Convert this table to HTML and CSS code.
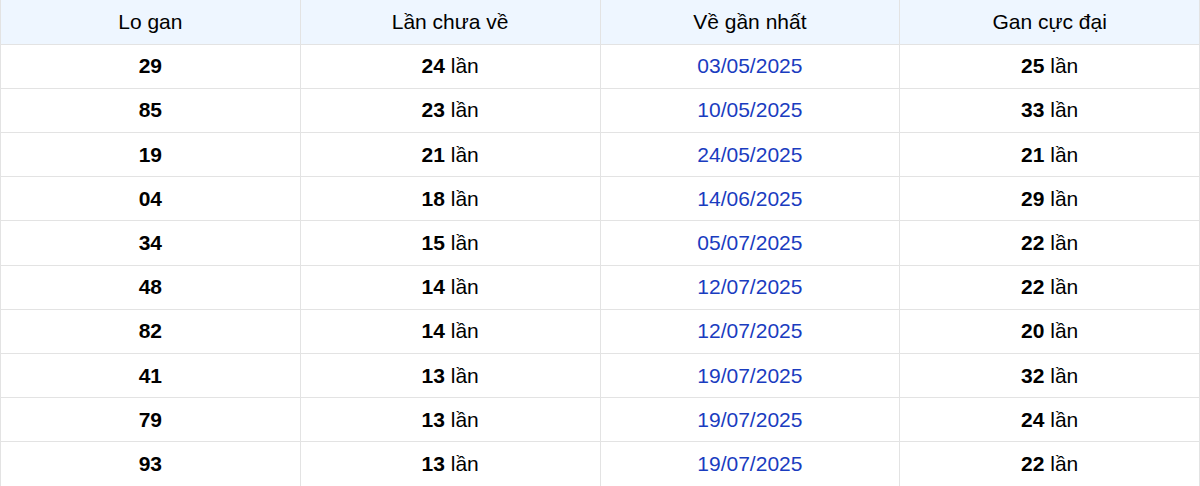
FILE: index.html
```html
<!DOCTYPE html>
<html>
<head>
<meta charset="utf-8">
<link rel="stylesheet" href="styles.css">
</head>
<body>
<table class="gan">
<thead>
<tr><th>Lo gan</th><th>Lần chưa về</th><th>Về gần nhất</th><th>Gan cực đại</th></tr>
</thead>
<tbody>
<tr><td><b>29</b></td><td><b>24</b> lần</td><td class="date">03/05/2025</td><td><b>25</b> lần</td></tr>
<tr><td><b>85</b></td><td><b>23</b> lần</td><td class="date">10/05/2025</td><td><b>33</b> lần</td></tr>
<tr><td><b>19</b></td><td><b>21</b> lần</td><td class="date">24/05/2025</td><td><b>21</b> lần</td></tr>
<tr><td><b>04</b></td><td><b>18</b> lần</td><td class="date">14/06/2025</td><td><b>29</b> lần</td></tr>
<tr><td><b>34</b></td><td><b>15</b> lần</td><td class="date">05/07/2025</td><td><b>22</b> lần</td></tr>
<tr><td><b>48</b></td><td><b>14</b> lần</td><td class="date">12/07/2025</td><td><b>22</b> lần</td></tr>
<tr><td><b>82</b></td><td><b>14</b> lần</td><td class="date">12/07/2025</td><td><b>20</b> lần</td></tr>
<tr><td><b>41</b></td><td><b>13</b> lần</td><td class="date">19/07/2025</td><td><b>32</b> lần</td></tr>
<tr><td><b>79</b></td><td><b>13</b> lần</td><td class="date">19/07/2025</td><td><b>24</b> lần</td></tr>
<tr><td><b>93</b></td><td><b>13</b> lần</td><td class="date">19/07/2025</td><td><b>22</b> lần</td></tr>
</tbody>
</table>
</body>
</html>
```
FILE: styles.css
```css
html, body {
  margin: 0;
  padding: 0;
  background: #fff;
}
body {
  font-family: "Liberation Sans", Arial, sans-serif;
  font-size: 21px;
  color: #000;
}
.gan {
  width: 1200px;
  border-collapse: collapse;
  table-layout: fixed;
}
.gan th, .gan td {
  border: 1px solid #e3e3e3;
  text-align: center;
  vertical-align: middle;
  height: 44.2px;
  padding: 0;
  box-sizing: border-box;
}
.gan th {
  background: #eef6ff;
  font-weight: normal;
  border-top: none;
}
.gan b {
  font-weight: bold;
}
.gan td.date {
  color: #1a3cbf;
}
```
